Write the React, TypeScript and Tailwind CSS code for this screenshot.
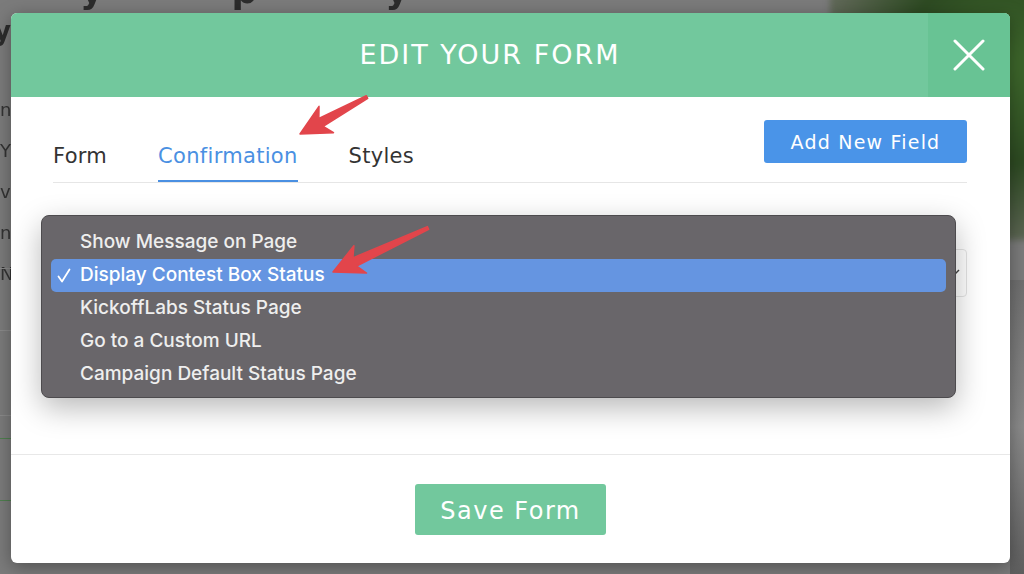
import React from 'react';

type Pt = [number, number];

const Arrow: React.FC<{ tail: Pt; tip: Pt }> = ({ tail, tip }) => {
  const dx = tip[0] - tail[0];
  const dy = tip[1] - tail[1];
  const len = Math.hypot(dx, dy);
  const ux = dx / len;
  const uy = dy / len;
  const nx = -uy;
  const ny = ux;
  const head = 30;
  const base: Pt = [tip[0] - ux * head, tip[1] - uy * head];
  const notch: Pt = [tip[0] - ux * (head - 6), tip[1] - uy * (head - 6)];
  const p = (o: Pt, w: number): string => `${o[0] + nx * w},${o[1] + ny * w}`;
  const pts = [
    p(tail, 1.5),
    p(notch, 4.5),
    p(base, 15),
    `${tip[0]},${tip[1]}`,
    p(base, -15),
    p(notch, -4.5),
    p(tail, -1.5),
  ].join(' ');
  return <polygon points={pts} fill="#e2454b" strokeLinejoin="round" stroke="#e2454b" strokeWidth="1.5" />;
};

const options = [
  'Show Message on Page',
  'Display Contest Box Status',
  'KickoffLabs Status Page',
  'Go to a Custom URL',
  'Campaign Default Status Page',
];

export default function App() {
  return (
    <div className="relative w-[1024px] h-[574px] overflow-hidden bg-[#7b7b7b] font-['DejaVu_Sans',sans-serif]">
      {/* blurred page behind the overlay */}
      <div className="absolute inset-0 pointer-events-none">
        <div className="absolute left-[80px] -top-[36px] flex gap-[128px] text-[36px] font-bold text-[#2c2c2c] blur-[0.6px]">
          <span>y</span>
          <span>p</span>
          <span>y</span>
        </div>
        <div className="absolute -left-[6px] top-[12px] text-[26px] font-bold text-[#2c2c2c] blur-[0.6px]">yo</div>
        <div className="absolute left-0 top-[96px] w-[11px] h-[330px] flex flex-col gap-[14px] text-[18px] text-[#333] blur-[0.5px]">
          <span>n</span>
          <span>Y</span>
          <span>v</span>
          <span>n</span>
          <span>N</span>
        </div>
        <div className="absolute left-0 top-[268px] w-[11px] h-px bg-[#8a8a8a]" />
        <div className="absolute left-0 top-[330px] w-[11px] h-px bg-[#8a8a8a]" />
        <div className="absolute left-0 top-[415px] w-[11px] h-px bg-[#8a8a8a]" />
        <div className="absolute left-0 top-[438px] w-[11px] h-px bg-[#4f7f4f]" />
        <div className="absolute left-0 top-[500px] w-[11px] h-px bg-[#4f7f4f]" />
        <div className="absolute left-[830px] -top-[10px] w-[230px] h-[250px] rounded-bl-[120px] bg-[radial-gradient(ellipse_at_75%_30%,#3f6a2c_0%,#2d4a22_40%,#5b6552_70%,transparent_100%)] blur-[3px]" />
        <div className="absolute left-[1010px] top-[280px] w-[14px] h-[294px] bg-gradient-to-b from-[#6f6f6f] via-[#8a8a8a] to-[#5f5f5f]" />
      </div>

      {/* modal */}
      <div className="relative mt-[13px] ml-[11px] w-[999px] h-[550px] bg-white rounded-[6px] shadow-[0_4px_18px_rgba(0,0,0,0.35)] flex flex-col overflow-hidden">
        <div className="h-[84px] flex shrink-0 bg-[#72c89d]">
          <div className="flex-1 flex items-center justify-center pl-[41px] text-white text-[27px] tracking-[2px]">
            EDIT YOUR FORM
          </div>
          <button className="w-[82px] bg-[#68c394] flex items-center justify-center text-white">
            <svg width="32" height="32" viewBox="0 0 32 32" fill="none" stroke="white" strokeWidth="3" strokeLinecap="round">
              <path d="M2 2 L30 30 M30 2 L2 30" />
            </svg>
          </button>
        </div>

        <div className="relative flex-1 flex flex-col px-[42px] pr-[43px]">
          <div className="flex items-end justify-between border-b border-[#e6e6e6] h-[86px]">
            <div className="flex items-end gap-[51px] text-[21px] tracking-[0.3px]">
              <div className="pb-[10px] text-[#333]">Form</div>
              <div className="pb-[8px] text-[#4a90e2] border-b-2 border-[#4a90e2]">Confirmation</div>
              <div className="pb-[10px] text-[#333]">Styles</div>
            </div>
            <button className="self-start mt-[23px] w-[203px] h-[43px] pt-[2px] rounded-[3px] bg-[#4a94e8] text-white text-[19px] tracking-[1.2px]">
              Add New Field
            </button>
          </div>

          <div className="mt-[66px] h-[48px] rounded-[4px] border border-[#e4e4e4] flex items-center justify-end pr-[5px]">
            <svg width="8" height="8" viewBox="0 0 8 8" fill="none" stroke="#444" strokeWidth="1.5">
              <path d="M1 6 L6 1" />
            </svg>
          </div>

          <div className="flex-1" />
        </div>

        <div className="h-[109px] shrink-0 border-t border-[#e8e8e8] flex justify-center pt-[29px]">
          <button className="w-[191px] h-[51px] pt-[2px] rounded-[3px] bg-[#72c89d] text-white text-[24px] tracking-[1.5px]">
            Save Form
          </button>
        </div>

        {/* native select menu overlay */}
        <div className="absolute left-[30px] top-[202px] w-[915px] h-[183px] rounded-[8px] bg-[#69666a] border border-[#4d4b4e] shadow-[0_10px_30px_rgba(0,0,0,0.28)] pt-[10px] px-[9px] font-['Inter',sans-serif] text-[19px] font-medium text-[#eeeeee]">
          {options.map((o, i) => (
            <div
              key={o}
              className={`h-[33px] rounded-[5px] flex items-center ${i === 1 ? 'bg-[#6595e1] text-white' : ''}`}
            >
              <span className="w-[29px] flex justify-start pl-[6px]">
                {i === 1 && (
                  <svg width="14" height="15" viewBox="0 0 14 15" fill="none" stroke="white" strokeWidth="1.8" strokeLinecap="round" strokeLinejoin="round">
                    <path d="M1.5 8.5 L5 13.5 L12.5 1.5" />
                  </svg>
                )}
              </span>
              <span>{o}</span>
            </div>
          ))}
        </div>
      </div>

      {/* annotation arrows */}
      <svg className="absolute inset-0 pointer-events-none" width="1024" height="574">
        <Arrow tail={[367, 97]} tip={[300, 134]} />
        <Arrow tail={[428, 228]} tip={[333, 272]} />
      </svg>
    </div>
  );
}
